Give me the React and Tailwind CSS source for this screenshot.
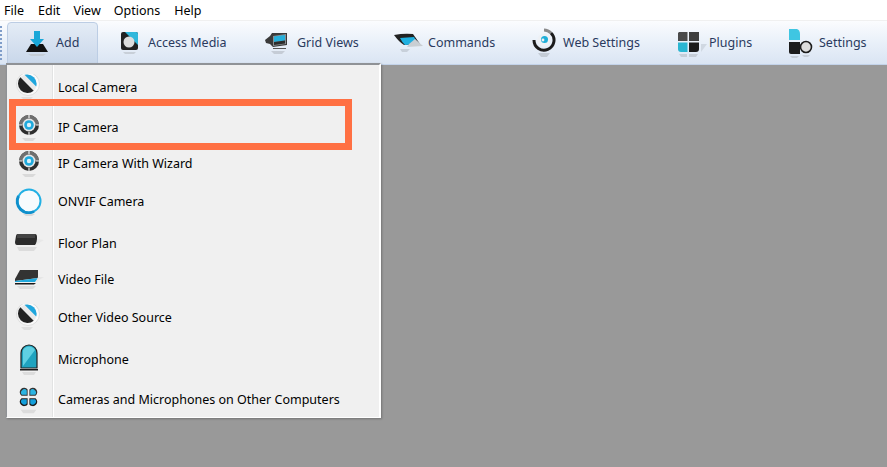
import React from 'react';

const FONT = 'font-["Noto_Sans","Open_Sans",sans-serif]';

// toolbar icons
const AddIcon = () => (
  <svg width="24" height="26" viewBox="0 0 24 26">
    <path d="M1 22 L6 14 L18 14 L23 22 Z" fill="#111" />
    <path d="M9 1 H15 V9 H19 L12 17 L5 9 H9 Z" fill="#19a7d8" />
    <path d="M3 24 H21 L18 26 H6 Z" fill="#c5cdd6" />
  </svg>
);

const MediaIcon = () => (
  <svg width="20" height="24" viewBox="0 0 20 24">
    <rect x="1" y="1" width="17" height="18" rx="2" fill="#222" />
    <path d="M5 1 H16 Q18 1 18 3 V14 Z" fill="#31b8dc" />
    <circle cx="9" cy="11" r="5.5" fill="#ddd" />
    <path d="M3 21 H16 L14 23 H5 Z" fill="#c8cfd8" />
  </svg>
);

const GridIcon = () => (
  <svg width="25" height="24" viewBox="0 0 25 24">
    <path d="M0 9 L5 5 L7 2 H22 V14 L8 16 L5 13 L1 12 Z" fill="#3a3a3a" />
    <path d="M8 5 L21 3 V13 L8 15 Z" fill="#8a8f93" />
    <path d="M9 5.5 L20 4 V9.5 L9 11 Z" fill="#25b0dc" />
    <path d="M9 11 L20 9.5 V12.5 L9 14 Z" fill="#2c2c2c" />
    <path d="M8 17 H21 V18 H8 Z" fill="#555" />
    <path d="M6 20 H20 L17 23 H9 Z" fill="#c5ccd6" />
  </svg>
);

const CommandsIcon = () => (
  <svg width="30" height="20" viewBox="0 0 30 20">
    <path d="M0 2 Q10 0 19 1 L26 11 L10 12 Q5 9 0 2 Z" fill="#222" />
    <path d="M6 5 L20 4 L24 11 L11 12 Q8 9 6 5 Z" fill="#1fb0e0" />
    <path d="M15 11 L21 6 L29 13 L13 14 Z" fill="#c9ced3" />
    <path d="M6 16 H16 L13 19 H8 Z" fill="#c8d0da" />
  </svg>
);

const WebIcon = () => (
  <svg width="24" height="30" viewBox="0 0 24 30">
    <path d="M12 2 A10 10 0 0 1 19 5" fill="none" stroke="#8a8a8a" strokeWidth="3" />
    <path d="M19 5 A10 10 0 1 1 2 12" fill="none" stroke="#1c1c1c" strokeWidth="3" />
    <circle cx="12" cy="12" r="6.5" fill="#eef1f5" />
    <circle cx="12.5" cy="11.5" r="3.5" fill="#1daed8" />
    <circle cx="11" cy="12" r="1.4" fill="#eef1f5" />
    <path d="M6 25 H18 L15 29 H9 Z" fill="#c4ccd6" />
  </svg>
);

const PluginsIcon = () => (
  <svg width="30" height="28" viewBox="0 0 30 28">
    <path d="M2 3 H10.5 V12 H1 V4 Z" fill="#4a4a4a" />
    <path d="M12 3 H22 V12 H12 Z" fill="#3e3e3e" />
    <path d="M1 13.5 H10.5 V23 H4 Q1 23 1 20 Z" fill="#2ab6d2" />
    <path d="M12 13.5 H22 V20 Q22 23 19 23 H12 Z" fill="#1c1c1c" />
    <path d="M24 15 H30 L24 23 Z" fill="#d0d8e2" />
    <path d="M2 25 H10 V28 H4 Z" fill="#c6ced8" />
    <path d="M12 25 H21 L19 28 H12 Z" fill="#c6ced8" />
  </svg>
);

const SettingsIcon = () => (
  <svg width="26" height="30" viewBox="0 0 26 30">
    <path d="M1 1 H9 Q12 2 12 6 V12 H1 Z" fill="#3fc6e2" />
    <path d="M1 14 H12 V26 H3 Q1 26 1 24 Z" fill="#1c1c1c" />
    <circle cx="18" cy="19" r="5.5" fill="#ddd" stroke="#1c1c1c" strokeWidth="1.6" />
    <path d="M2 28 H11 L9 30 H4 Z" fill="#c6ced8" />
    <path d="M14 27 H22 L20 29 H16 Z" fill="#c6ced8" />
  </svg>
);

// menu icons
const LensIcon = () => (
  <svg width="26" height="28" viewBox="0 0 26 28">
    <circle cx="12" cy="10" r="11.5" fill="#fafafa" stroke="#dddddd" />
    <circle cx="11" cy="10" r="9.5" fill="#e9e9e9" />
    <path d="M4.3 3.3 A9.5 9.5 0 0 0 17.7 16.7 Z" fill="#222" />
    <path d="M8.5 0.8 A9.5 9.5 0 0 1 20.2 12.5 Z" fill="#1fa6dd" />
    <path d="M5 23 H17 L14 26 H8 Z" fill="#dedede" />
  </svg>
);

const IpIcon = () => (
  <svg width="24" height="28" viewBox="0 0 24 28">
    <circle cx="12" cy="11" r="10" fill="#2e2e2e" />
    <path d="M2 11 A10 10 0 0 1 22 11 H18 A6 6 0 0 0 6 11 Z" fill="#6f6f6f" />
    <circle cx="12" cy="11" r="6.5" fill="#e6e6e6" />
    <circle cx="12" cy="11" r="4.8" fill="#1fa9dc" />
    <circle cx="12" cy="11" r="2.2" fill="#d9f0f9" />
    <path d="M11.4 0.5 H12.6 V4 H11.4 Z M11.4 18 H12.6 V21.5 H11.4 Z M1.5 10.4 H5 V11.6 H1.5 Z M19 10.4 H22.5 V11.6 H19 Z" fill="#efefef" />
    <path d="M5 24 H19 L16 27 H8 Z" fill="#d9d9d9" />
  </svg>
);

const OnvifIcon = () => (
  <svg width="28" height="30" viewBox="0 0 28 30">
    <circle cx="14" cy="14" r="11.5" fill="#f7fbfd" stroke="#22b0e4" strokeWidth="2" />
    <path d="M3.5 9 A11.5 11.5 0 0 0 19 24.5" fill="none" stroke="#0f8fcb" strokeWidth="3" />
    <path d="M8 27 H20 L17 29 H11 Z" fill="#d8d8d8" />
  </svg>
);

const FloorIcon = () => (
  <svg width="30" height="22" viewBox="0 0 30 22">
    <path d="M2 3 Q2 1 4 1 H21 Q23 1 23 4 V9 L21 12 H3 Q1 12 1 9 Z" fill="#2c2c2c" />
    <path d="M3 1 H21 V5 H3 Z" fill="#444" />
    <path d="M23 6 L30 7 L22 12 Z" fill="#e8e8e8" />
    <path d="M3 14 H23 L20 18 H5 Z" fill="#dcdcdc" />
  </svg>
);

const VideoIcon = () => (
  <svg width="30" height="22" viewBox="0 0 30 22">
    <path d="M1 10 L6 1 H24 V9 L1 12 Z" fill="#333" />
    <path d="M1 12 L24 9 L21 13 H1 Z" fill="#1fa8dc" />
    <path d="M1 14 H22 L20 15.5 H1 Z" fill="#1a1a1a" />
    <path d="M24 8 L30 8 L22 13 Z" fill="#e6e6e6" />
    <path d="M3 17 H22 L19 20 H6 Z" fill="#dcdcdc" />
  </svg>
);

const MicIcon = () => (
  <svg width="20" height="32" viewBox="0 0 20 32">
    <path d="M2 24 V9 A8 8 0 0 1 18 9 V24 Z" fill="#1fa3bf" stroke="#222" strokeWidth="1.2" />
    <path d="M4 6 A7 7 0 0 1 16 6 L4 22 Z" fill="#5fd0e2" />
    <path d="M1 25 H19 V26.5 H1 Z" fill="#1a1a1a" />
    <path d="M3 28 H17 L15 31 H5 Z" fill="#dcdcdc" />
  </svg>
);

const RemoteIcon = () => (
  <svg width="23" height="28" viewBox="0 0 26 32">
    <path d="M12 11 H5 A5 5 0 1 1 12 4 Z" fill="#333" />
    <path d="M14 11 V4 A5 5 0 1 1 21 11 Z" fill="#333" />
    <path d="M12 14 H5 A5 5 0 1 0 12 21 Z" fill="#1c1c1c" />
    <path d="M14 14 V21 A5 5 0 1 0 21 14 Z" fill="#1c1c1c" />
    <path d="M11 10 H5.5 A3.5 3.5 0 1 1 11 5 Z" fill="#2bb4e2" />
    <path d="M15 10 V5 A3.5 3.5 0 1 1 20.5 10 Z" fill="#2bb4e2" />
    <path d="M11 15 H5.5 A3.5 3.5 0 1 0 11 20 Z" fill="#15a0dc" />
    <path d="M15 15 V20 A3.5 3.5 0 1 0 20.5 15 Z" fill="#15a0dc" />
    <path d="M4 27 H22 L19 31 H7 Z" fill="#dcdcdc" />
  </svg>
);

const MENUS = [
  { label: 'File', cls: 'ml-[4px]' },
  { label: 'Edit', cls: 'ml-[14px]' },
  { label: 'View', cls: 'ml-[13px]' },
  { label: 'Options', cls: 'ml-[13px]' },
  { label: 'Help', cls: 'ml-[14px]' },
];

const TOOLS = [
  { label: 'Add', Icon: AddIcon, cls: 'w-[91px] pl-[17px] gap-[7px] ml-[4px] border border-[#bccde4] rounded-t-sm bg-gradient-to-b from-[#e4ecf6] to-[#c9d7ea]' },
  { label: 'Access Media', Icon: MediaIcon, cls: 'w-[150px] pl-[22px] gap-[8px]' },
  { label: 'Grid Views', Icon: GridIcon, cls: 'w-[130px] pl-[17px] gap-[7px]' },
  { label: 'Commands', Icon: CommandsIcon, cls: 'w-[146px] pl-[16px] gap-[4px]' },
  { label: 'Web Settings', Icon: WebIcon, cls: 'w-[145px] pl-[8px] gap-[7px]' },
  { label: 'Plugins', Icon: PluginsIcon, cls: 'w-[111px] pl-[8px] gap-[2px]' },
  { label: 'Settings', Icon: SettingsIcon, cls: 'pl-[8px] gap-[5px]' },
];

const ITEMS = [
  { label: 'Local Camera', Icon: LensIcon, cls: 'h-[40px]' },
  { label: 'IP Camera', Icon: IpIcon, cls: 'h-[40px]' },
  { label: 'IP Camera With Wizard', Icon: IpIcon, cls: 'h-[32px]' },
  { label: 'ONVIF Camera', Icon: OnvifIcon, cls: 'h-[44px]' },
  { label: 'Floor Plan', Icon: FloorIcon, cls: 'h-[40px]' },
  { label: 'Video File', Icon: VideoIcon, cls: 'h-[32px]' },
  { label: 'Other Video Source', Icon: LensIcon, cls: 'h-[44px]' },
  { label: 'Microphone', Icon: MicIcon, cls: 'h-[40px]' },
  { label: 'Cameras and Microphones on Other Computers', Icon: RemoteIcon, cls: 'h-[40px]' },
];

export default function App() {
  return (
    <div className={`relative flex flex-col h-[467px] w-[887px] overflow-hidden bg-[#999999] ${FONT}`}>
      {/* menu bar */}
      <div className="flex shrink-0 items-center h-[18px] pt-[2px] bg-white text-[12.5px] text-black border-b border-[#f0f0f0] box-content">
        {MENUS.map(m => (
          <span key={m.label} className={m.cls}>{m.label}</span>
        ))}
      </div>

      {/* toolbar */}
      <div className="flex shrink-0 h-[44px] pt-[1px] bg-gradient-to-b from-[#fbfcfe] via-[#e9f0f9] via-50% to-[#dae5f3] border-b border-[#c3d3ea] text-[12.5px] text-[#2a3a5e]">
        <div className="w-[3px] my-[4px] border-l-2 border-dotted border-[#7f9dc9]" />
        {TOOLS.map(({ label, Icon, cls }) => (
          <div key={label} className={`flex items-center ${cls}`}>
            <Icon />
            <span>{label}</span>
          </div>
        ))}
      </div>

      {/* dropdown */}
      <div className="absolute left-[6px] top-[63px] w-[375px] h-[355px] pt-[3px] bg-[#f0f0f0] border-t-2 border-l border-[#8f9296] border-r-2 border-r-white border-b border-b-white shadow-[1px_1px_2px_rgba(0,0,0,0.25)] text-[12.5px] text-black">
        <div className="absolute left-[45px] top-0 bottom-0 w-[1px] bg-[#e2e3e3] border-r border-white box-content" />
        {ITEMS.map(({ label, Icon, cls }) => (
          <div key={label} className={`flex items-center ${cls}`}>
            <div className="flex items-center justify-center w-[41px] shrink-0 ml-[1px]"><Icon /></div>
            <span className="ml-[9px]">{label}</span>
          </div>
        ))}
      </div>

      {/* highlight */}
      <div className="absolute left-[9px] top-[99px] w-[343px] h-[51px] border-[7px] border-[#ff7043]" />
    </div>
  );
}
